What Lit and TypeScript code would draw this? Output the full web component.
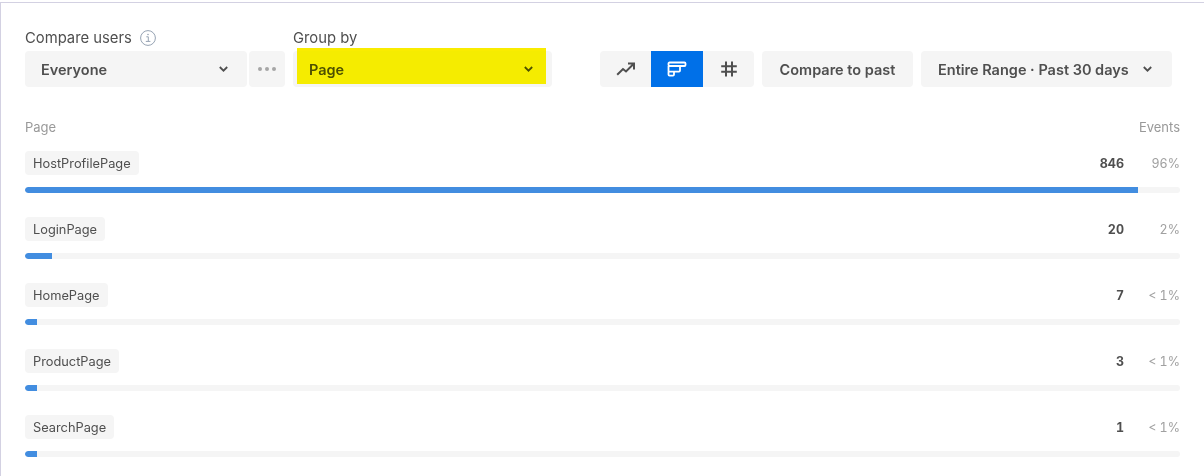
import { LitElement, html, css, svg } from "lit";
import { customElement } from "lit/decorators.js";

const rows = [
  { name: "HostProfilePage", n: "846", p: "96%", w: 96.35 },
  { name: "LoginPage", n: "20", p: "2%", w: 2.3 },
  { name: "HomePage", n: "7", p: "< 1%", w: 1.04 },
  { name: "ProductPage", n: "3", p: "< 1%", w: 1.04 },
  { name: "SearchPage", n: "1", p: "< 1%", w: 1.04 },
];

const chevron = svg`<svg class="chev" width="9" height="6" viewBox="0 0 9 6" fill="none"><path d="M.8 1l3.700 3.700L8.200 1" stroke="currentColor" stroke-width="1.800"/></svg>`;

@customElement("app-root")
export class AppRoot extends LitElement {
  static styles = css`
    :host { display: block; width: 1204px; height: 476px; box-sizing: border-box; overflow: hidden; background: #fff; font-family: Inter, "Noto Sans", sans-serif; color: #4f4f4f; padding-top: 2px; }
    .frame { height: 474px; box-sizing: border-box; border-top: 1px solid #d3d1e2; border-left: 1px solid #d3d1e2; padding: 20px 24px 0 24px; position: relative; }
    .controls { display: flex; align-items: flex-end; height: 64px; }
    .field { display: flex; flex-direction: column; }
    .label { display: flex; align-items: center; gap: 8px; font-size: 14.8px; line-height: 20px; height: 20px; margin-bottom: 3px; padding-top: 1px; color: #4f4f4f; }
    .info { width: 16px; height: 16px; display: block; }
    .row-btns { display: flex; }
    .btn { height: 36px; box-sizing: border-box; background: #f5f5f5; border-radius: 4px; display: flex; align-items: center; font-size: 14.5px; font-weight: 600; color: #4f4f4f; }
    .txt { padding-top: 1px; }
    .select { justify-content: space-between; padding: 0 19.500px 0 16px; }
    .everyone { width: 222px; }
    .dots { width: 36px; justify-content: center; margin-left: 2px; gap: 3px; }
    .dot { width: 4px; height: 4px; border-radius: 50%; background: #a6a6a6; }
    .group { margin-left: 8px; }
    .page { width: 259px; }
    .highlight { position: absolute; left: 296px; top: 45px; width: 249px; height: 36px; background: #f9ec00; mix-blend-mode: darken; }
    .toggle { display: flex; margin-left: 48px; height: 36px; background: #f5f5f5; border-radius: 4px; overflow: hidden; }
    .cell { width: 51px; display: flex; align-items: center; justify-content: center; color: #4f4f4f; }
    .cell.on { width: 52px; background: #0070e8; color: #fff; }
    .compare { margin-left: 8px; width: 151px; justify-content: center; }
    .range { margin-left: 8px; width: 251px; padding: 0 20px 0 17px; justify-content: space-between; }
    .table { margin-top: 32px; width: 1155px; }
    .head { display: flex; justify-content: space-between; font-size: 13px; line-height: 16px; color: #999; height: 16px; margin-bottom: 16px; }
    .row { height: 66px; }
    .top { display: flex; justify-content: space-between; align-items: center; height: 24px; margin-bottom: 12px; }
    .pill { height: 24px; box-sizing: border-box; padding: 0 8px; display: flex; align-items: center; background: #f5f5f5; border-radius: 4px; font-size: 12.800px; color: #4f4f4f; }
    .nums { display: flex; align-items: center; font-variant-numeric: tabular-nums; }
    .n { font-size: 12.500px; font-weight: 700; color: #4f4f4f; text-align: right; }
    .p { width: 56px; text-align: right; font-size: 12.500px; color: #a0a0a0; }
    .track { height: 6px; background: #f5f5f5; border-radius: 3px; overflow: hidden; }
    .fill { height: 100%; background: #428de0; border-radius: 3px 0 0 3px; }
    .chev { display: block; }
    svg { flex: none; }
  `;

  render() {
    return html`<div class="frame">
      <div class="controls">
        <div class="field">
          <div class="label">Compare users
            <svg class="info" viewBox="0 0 16 16" fill="none" stroke="#96a3b3"><circle cx="8" cy="8" r="7.400"/><path d="M6.300 6.800h2v4.500M5.800 11.400h4.600" stroke-width="1"/><circle cx="8" cy="4.500" r=".8" fill="#96a3b3" stroke="none"/></svg>
          </div>
          <div class="row-btns">
            <div class="btn select everyone"><span class="txt">Everyone</span>${chevron}</div>
            <div class="btn dots"><i class="dot"></i><i class="dot"></i><i class="dot"></i></div>
          </div>
        </div>
        <div class="field group">
          <div class="label">Group by</div>
          <div class="btn select page"><span class="txt">Page</span>${chevron}</div>
        </div>
        <div class="toggle">
          <div class="cell">
            <svg width="20" height="14" viewBox="0 0 20 14" fill="none" stroke="currentColor" stroke-width="2"><path d="M1.200 12.800l5.800-5.800 3 2.500 7-7M12 1.600h6v5.800"/></svg>
          </div>
          <div class="cell on">
            <svg width="20" height="16" viewBox="0 0 20 16" fill="none" stroke="currentColor" stroke-width="1.800"><path d="M2.500 1.500h15a1 1 0 0 1 1 1v1.500a1 1 0 0 1-1 1h-15a1 1 0 0 1-1-1v-1.500a1 1 0 0 1 1-1zM1.500 5v5a.6.6 0 0 0 .6.6h9.900a1 1 0 0 0 1-1V5M1.500 10.600v3a1 1 0 0 0 1 1h3.500a1 1 0 0 0 1-1v-3"/></svg>
          </div>
          <div class="cell">
            <svg width="16" height="16" viewBox="0 0 16 16" fill="none" stroke="currentColor" stroke-width="2"><path d="M5 .5v15M11 .5v15M.2 5.300h15.600M.2 10.700h15.600"/></svg>
          </div>
        </div>
        <div class="btn compare"><span class="txt">Compare to past</span></div>
        <div class="btn range"><span class="txt">Entire Range · Past 30 days</span>${chevron}</div>
      </div>
      <div class="highlight"></div>
      <div class="table">
        <div class="head"><span>Page</span><span>Events</span></div>
        ${rows.map(r => html`<div class="row">
          <div class="top">
            <div class="pill">${r.name}</div>
            <div class="nums"><span class="n">${r.n}</span><span class="p">${r.p}</span></div>
          </div>
          <div class="track"><div class="fill" style="width:${r.w}%"></div></div>
        </div>`)}
      </div>
    </div>`;
  }
}
